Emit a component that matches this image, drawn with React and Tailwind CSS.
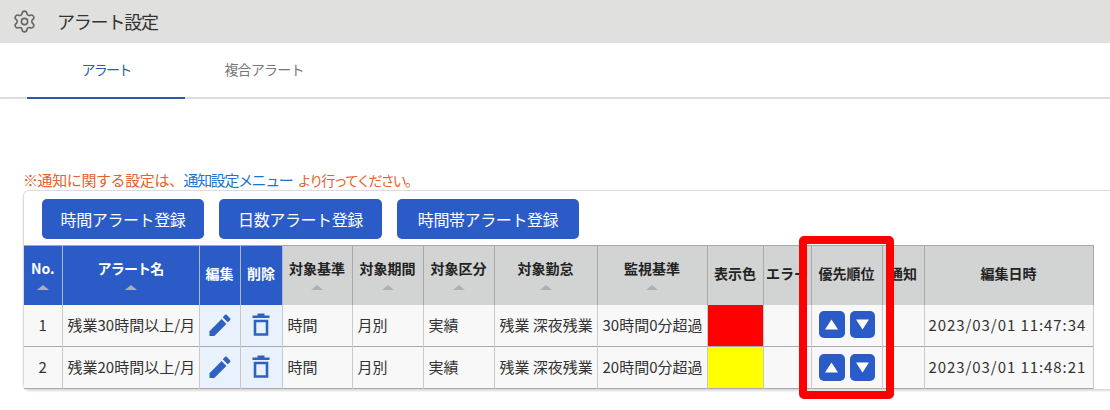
import React from "react";
import { Settings } from "lucide-react";

const font = { fontFamily: '"Noto Sans CJK JP", "Noto Sans", sans-serif' };

function SortMark() {
  return <div className="mx-auto mt-[6px] h-0 w-0 border-x-[6px] border-b-[5px] border-x-transparent border-b-[#a9b0b8]" />;
}

function Pencil() {
  return (
    <svg width="24" height="24" viewBox="0 0 24 24" className="mx-auto block">
      <path fill="#2f62c0" d="M1.5 18.2V23h4.8L18.4 10.9l-4.8-4.8L1.5 18.2z" />
      <path fill="#2f62c0" d="M22 7.2c.6-.6.6-1.4 0-2L18.9 2c-.6-.6-1.4-.6-2 0l-2.2 2.2 5 5L22 7.2z" />
    </svg>
  );
}

function Trash() {
  return (
    <svg width="24" height="24" viewBox="0 0 24 24" className="mx-auto block">
      <path fill="#2f62c0" d="M3.5 2.5h17v2.6h-17zM8.5 .5h7v2.5h-7z" />
      <path fill="none" stroke="#2f62c0" strokeWidth="2.6" d="M6 8h12v13.5H6z" />
    </svg>
  );
}

function Arrow({ up }) {
  return (
    <button className={`flex h-[27px] items-center justify-center rounded-[5px] bg-[#2a5bc7] ${up ? "w-[26px]" : "w-[25px]"}`}>
      <svg width="13" height="11" viewBox="0 0 13 11">
        <path fill="#fff" d={up ? "M6.5 0.5L13 10.5H0z" : "M0 .5h13L6.5 10.5z"} />
      </svg>
    </button>
  );
}

const blueTh = "border-r border-[#aeb9cf] bg-[#2a5bc7] p-0 text-[14px] font-bold text-white";
const grayTh = "border-r border-[#a9a9a9] bg-[#d2d3d3] p-0 text-[14px] font-bold text-[#222]";
const td = "border-r border-[#c9c9c9] p-0 pb-[1px] text-[15px] text-[#333]";
const white = "bg-[#f8f8f8]";
const icon = "bg-[#e9f2fc]";

const rows = [
  { n: 1, name: "残業30時間以上/月", basis: "30時間0分超過", color: "bg-[#ff0000]", date: "2023/03/01 11:47:34" },
  { n: 2, name: "残業20時間以上/月", basis: "20時間0分超過", color: "bg-[#ffff00]", date: "2023/03/01 11:48:21" },
];

function Btn({ children, w }) {
  return (
    <button className={`h-10 rounded-[5px] bg-[#2a5bc7] text-center text-[16px] tracking-[-0.4px] text-white ${w}`}>{children}</button>
  );
}

function Head({ children }) {
  return (
    <>
      <div className="-mt-[3px]">{children}</div>
      <SortMark />
    </>
  );
}

export default function App() {
  return (
    <div className="relative h-[410px] w-[1110px] overflow-hidden bg-white" style={font}>
      <header className="flex h-[43px] items-center bg-[#e0e0de] pl-[12px]">
        <Settings size={25} strokeWidth={1.5} className="text-[#666]" />
        <h1 className="ml-[20px] text-[18px] font-normal tracking-[-1.2px] text-[#333]">アラート設定</h1>
      </header>

      <nav className="flex h-[56px] border-b-2 border-[#dddddd] pl-[27px]">
        <div className="-mb-[2px] flex w-[158px] items-center justify-center border-b-2 border-[#2a5bab] pb-[1px] text-[14px] tracking-[-1.8px] text-[#2a5bab]">アラート</div>
        <div className="flex w-[158px] items-center justify-center pb-[1px] text-[14px] tracking-[-0.8px] text-[#777]">複合アラート</div>
      </nav>

      <p className="ml-[23px] mt-[71px] h-[20px] whitespace-nowrap text-[15px] leading-[20px] tracking-[-0.4px] text-[#e8602c]">
        ※通知に関する設定は、<span className="tracking-[-1.4px] text-[#1a75d2]">通知設定メニュー</span><span className="ml-[5px] text-[14px] tracking-[-1.9px]">より行ってください。</span>
      </p>

      <section className="ml-[23px] h-[200px] w-[1200px] rounded-[6px] border border-[#dcdcdc] shadow-[0_1px_2px_rgba(0,0,0,0.15)]">
        <div className="flex gap-[15px] pl-[18px] pt-[8px]">
          <Btn w="w-[162px]">時間アラート登録</Btn>
          <Btn w="w-[163px]">日数アラート登録</Btn>
          <Btn w="w-[182px]">時間帯アラート登録</Btn>
        </div>
        <table className="mt-[6px] w-[1069px] table-fixed border-collapse border-t border-[#a9a9a9]">
          <colgroup>
            {[38, 137, 41, 42, 70, 71, 71, 103, 110, 56, 48, 71, 42, 169].map((w, i) => (
              <col key={i} style={{ width: w }} />
            ))}
          </colgroup>
          <thead>
            <tr className="h-[59px] text-center">
              <th className={blueTh}><Head>No.</Head></th>
              <th className={blueTh}><Head><span className="tracking-[-0.8px]">アラート名</span></Head></th>
              <th className={`${blueTh} whitespace-nowrap`}><div className="pb-[3px]">編集</div></th>
              <th className={`${blueTh} whitespace-nowrap`}><div className="pb-[3px]">削除</div></th>
              <th className={grayTh}><Head>対象基準</Head></th>
              <th className={grayTh}><Head>対象期間</Head></th>
              <th className={grayTh}><Head>対象区分</Head></th>
              <th className={grayTh}><Head>対象勤怠</Head></th>
              <th className={grayTh}><Head>監視基準</Head></th>
              <th className={grayTh}><div className="pb-[3px]">表示色</div></th>
              <th className={`${grayTh} overflow-hidden whitespace-nowrap`}><div className="pb-[3px]">エラー</div></th>
              <th className={grayTh}><div className="pb-[3px]">優先順位</div></th>
              <th className={`${grayTh} overflow-hidden whitespace-nowrap`}><div className="pb-[3px]">通知</div></th>
              <th className={grayTh}><div className="pb-[3px]">編集日時</div></th>
            </tr>
          </thead>
          <tbody>
            {rows.map((r) => (
              <tr key={r.n} className="h-[42px] border-b border-[#a9a9a9]">
                <td className={`${td} ${white} text-center`}>{r.n}</td>
                <td className={`${td} ${white} whitespace-nowrap pl-[5px]`}>{r.name}</td>
                <td className={`${td} ${icon}`}><Pencil /></td>
                <td className={`${td} ${icon}`}><Trash /></td>
                <td className={`${td} ${white} pl-[5px]`}>時間</td>
                <td className={`${td} ${white} pl-[5px]`}>月別</td>
                <td className={`${td} ${white} pl-[5px]`}>実績</td>
                <td className={`${td} ${white} whitespace-nowrap pl-[5px]`}>残業 深夜残業</td>
                <td className={`${td} ${white} whitespace-nowrap pl-[5px]`}>{r.basis}</td>
                <td className={`${td} ${r.color}`} />
                <td className={`${td} ${white}`} />
                <td className={`${td} ${white}`}>
                  <div className="flex justify-center gap-[5px]"><Arrow up /><Arrow /></div>
                </td>
                <td className={`${td} ${white}`} />
                <td className={`${td} ${white} whitespace-nowrap pl-[4px] tracking-[0.93px]`}>{r.date}</td>
              </tr>
            ))}
          </tbody>
        </table>
      </section>

      <div className="absolute left-[799px] top-[236px] h-[163px] w-[95px] rounded-[5px] border-[8px] border-[#ff0000]" />
    </div>
  );
}
